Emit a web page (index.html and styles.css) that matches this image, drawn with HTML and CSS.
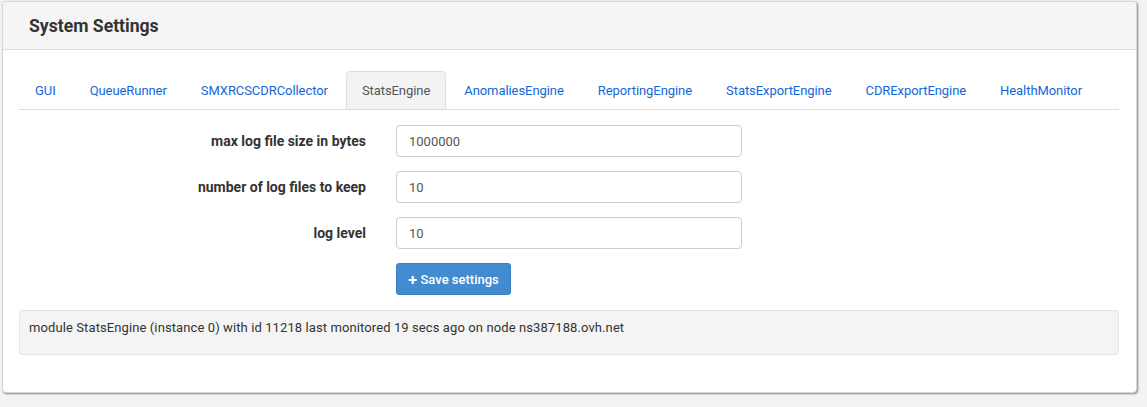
FILE: index.html
```html
<!DOCTYPE html>
<html>
<head>
<meta charset="utf-8">
<link rel="stylesheet" href="styles.css">
</head>
<body>
<div class="page">
  <div class="panel">
    <div class="panel-heading">System Settings</div>
    <div class="panel-body">
      <ul class="tabs">
        <li><a>GUI</a></li>
        <li><a>QueueRunner</a></li>
        <li><a>SMXRCSCDRCollector</a></li>
        <li class="active"><a>StatsEngine</a></li>
        <li><a>AnomaliesEngine</a></li>
        <li><a>ReportingEngine</a></li>
        <li><a>StatsExportEngine</a></li>
        <li><a>CDRExportEngine</a></li>
        <li><a>HealthMonitor</a></li>
      </ul>
      <form class="form">
        <label class="label">max log file size in bytes</label>
        <input class="input" type="text" value="1000000">
        <label class="label">number of log files to keep</label>
        <input class="input" type="text" value="10">
        <label class="label">log level</label>
        <input class="input" type="text" value="10">
        <span></span>
        <div><button type="button" class="btn"><span class="plus">&#x271A;</span> Save settings</button></div>
      </form>
      <div class="well">module StatsEngine (instance 0) with id 11218 last monitored 19 secs ago on node ns387188.ovh.net</div>
    </div>
  </div>
</div>
</body>
</html>
```
FILE: styles.css
```css
html, body {
  margin: 0;
  padding: 0;
  background: #f3f3f3;
  font-family: Roboto, "Liberation Sans", sans-serif;
  font-size: 13px;
  color: #333;
}
.page {
  padding: 1px 10px 12px 2px;
}
.panel {
  background: #fff;
  border: 1px solid #d6d6d6;
  border-radius: 4px;
  box-shadow: 1px 1px 2px rgba(0,0,0,0.45);
  height: 392px;
  box-sizing: border-box;
}
.panel-heading {
  background: #f5f5f5;
  border-bottom: 1px solid #dcdcdc;
  border-radius: 4px 4px 0 0;
  height: 48px;
  box-sizing: border-box;
  padding: 0 26px;
  display: flex;
  align-items: center;
  font-size: 17.6px;
  font-weight: bold;
  color: #333;
}
.panel-body {
  padding: 21px 17px 20px 16px;
}
.tabs {
  list-style: none;
  margin: 0;
  padding: 0;
  display: flex;
  border-bottom: 1px solid #ddd;
}
.tabs li {
  margin-bottom: -1px;
  margin-right: 2px;
}
.tabs a {
  display: block;
  padding: 0 15px 0 15px;
  height: 38px;
  line-height: 38px;
  color: #1267d8;
  letter-spacing: -0.07px;
  border: 1px solid transparent;
  border-radius: 4px 4px 0 0;
  box-sizing: border-box;
}
.tabs li.active a {
  color: #555;
  background: #f3f3f3;
  border-color: #ddd;
  height: 39px;
}
.form {
  display: grid;
  grid-template-columns: 347px 346px;
  column-gap: 30px;
  row-gap: 14px;
  padding-top: 15px;
  align-items: center;
}
.label {
  text-align: right;
  font-weight: bold;
  font-size: 14px;
  color: #333;
}
.input {
  height: 32px;
  box-sizing: border-box;
  border: 1px solid #ccc;
  border-radius: 4px;
  padding: 0 12px;
  font-family: Roboto, "Liberation Sans", sans-serif;
  font-size: 13px;
  color: #555;
  margin: 0;
}
.btn {
  height: 32px;
  width: 115px;
  background: #428bd0;
  border: 1px solid #3a7fc2;
  border-radius: 3px;
  color: #fff;
  font-family: Roboto, "Liberation Sans", sans-serif;
  font-size: 13px;
  font-weight: 500;
  padding: 0;
  margin: 0;
}
.plus {
  font-size: 11px;
}
.well {
  margin-top: 15px;
  background: #f4f4f4;
  border: 1px solid #e4e4e4;
  border-radius: 3px;
  height: 45px;
  box-sizing: border-box;
  padding: 0 9px;
  line-height: 33px;
  letter-spacing: 0.1px;
  color: #333;
}
```
